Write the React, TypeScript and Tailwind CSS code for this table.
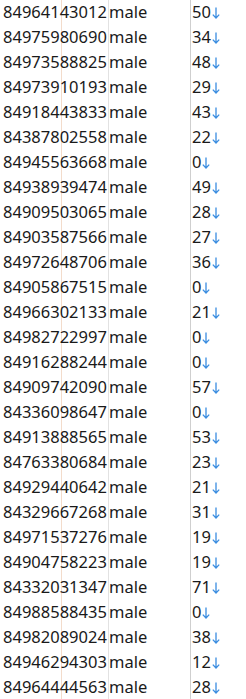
const rows: [string, number][] = [
  ["84964143012", 50],
  ["84975980690", 34],
  ["84973588825", 48],
  ["84973910193", 29],
  ["84918443833", 43],
  ["84387802558", 22],
  ["84945563668", 0],
  ["84938939474", 49],
  ["84909503065", 28],
  ["84903587566", 27],
  ["84972648706", 36],
  ["84905867515", 0],
  ["84966302133", 21],
  ["84982722997", 0],
  ["84916288244", 0],
  ["84909742090", 57],
  ["84336098647", 0],
  ["84913888565", 53],
  ["84763380684", 23],
  ["84929440642", 21],
  ["84329667268", 31],
  ["84971537276", 19],
  ["84904758223", 19],
  ["84332031347", 71],
  ["84988588435", 0],
  ["84982089024", 38],
  ["84946294303", 12],
  ["84964444563", 28],
];

const DownArrow = () => (
  <svg width="8" height="12" viewBox="0 0 8 12" className="ml-[1px] mt-[1px]">
    <path
      d="M4 0.5V11M0.8 7.6L4 11L7.2 7.6"
      fill="none"
      stroke="#3a8de0"
      strokeWidth="1.3"
    />
  </svg>
);

export default function App() {
  return (
    <div className="relative w-[246px] h-[699px] overflow-hidden bg-white font-['Noto_Sans','Liberation_Sans',sans-serif] text-[16.5px] text-[#1a1a1a]">
      {/* column guide lines */}
      <div className="absolute top-0 bottom-0 left-[61px] w-px bg-[#f3dccb]" />
      <div className="absolute top-0 bottom-0 left-[108px] w-px bg-[#e2e2e2]" />
      <div className="absolute top-0 bottom-0 left-[190px] w-px bg-[#cfcfcf]" />
      <div className="relative flex flex-col">
        {rows.map(([phone, n]) => (
          <div key={phone} className="flex h-[25px] items-center leading-none">
            <div className="w-[109px] pl-[3px]">{phone}</div>
            <div className="w-[82px]">male</div>
            <div className="flex items-center pl-[1px]">
              <span>{n}</span>
              <DownArrow />
            </div>
          </div>
        ))}
      </div>
    </div>
  );
}
